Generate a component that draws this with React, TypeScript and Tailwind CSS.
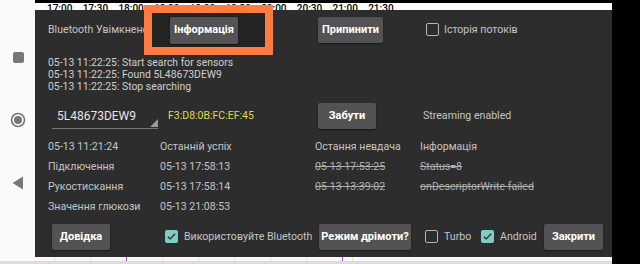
import React from "react";

const times = ["17:00", "17:30", "18:00", "18:30", "19:00", "19:30", "20:00", "20:30", "21:00", "21:30"];

function Box({ checked }: { checked?: boolean }) {
  if (checked) {
    return (
      <span className="w-[13px] h-[13px] rounded-[2px] bg-[#80cbc4] flex items-center justify-center shrink-0">
        <svg width="11" height="11" viewBox="0 0 24 24">
          <path d="M4 12.5l5 5L20 6" fill="none" stroke="#1f2b2a" strokeWidth="2.6" />
        </svg>
      </span>
    );
  }
  return <span className="w-[13px] h-[13px] rounded-[2px] border-[1.5px] border-[#b5b5b5] shrink-0" />;
}

function Btn({ children, className = "" }: { children: React.ReactNode; className?: string }) {
  return (
    <div
      className={`h-[26px] shrink-0 flex items-center justify-center bg-[#535353] rounded-[2px] text-white font-bold text-[11px] shadow-[0_1px_2px_rgba(0,0,0,0.5)] ${className}`}
    >
      {children}
    </div>
  );
}

export default function App() {
  const txt = "text-[#c4c4c4]";
  return (
    <div className="relative w-[640px] h-[264px] bg-black overflow-hidden flex font-['Roboto',sans-serif] text-[10.6px] whitespace-nowrap">
      {/* nav bar */}
      <div className="w-[35px] h-full bg-[#fafafa] flex flex-col items-center pt-[52px] shrink-0">
        <div className="w-[11px] h-[11px] rounded-[2px] bg-[#777] ml-[1px]" />
        <svg className="mt-[49px] ml-[1px]" width="16" height="16" viewBox="0 0 16 16">
          <circle cx="8" cy="8" r="6.5" fill="none" stroke="#777" strokeWidth="1.6" />
          <circle cx="8" cy="8" r="4" fill="#777" />
        </svg>
        <svg className="mt-[48px]" width="12" height="14" viewBox="0 0 12 14">
          <path d="M11 0.5v13L0.5 7z" fill="#777" />
        </svg>
      </div>

      <div className="w-[605px] flex flex-col shrink-0">
        {/* chart header */}
        <div className="h-[10px] pt-[3px] shrink-0">
          <div className="w-[577px] h-[7px] bg-white overflow-hidden flex pl-[12px]">
            {times.map((t) => (
              <span key={t} className="w-[35.7px] shrink-0 text-[10px] leading-[10px] text-black font-medium mt-[1px]">
                {t}
              </span>
            ))}
          </div>
        </div>

        {/* dialog */}
        <div className={`w-[577px] h-[247px] bg-[#2d2d2d] shrink-0 flex flex-col pl-[13px] pt-[7px] ${txt}`}>
          <div className="h-[26px] flex items-center">
            <span className="w-[122px] overflow-hidden">Bluetooth Увімкнено</span>
            <Btn className="w-[68px]">Інформація</Btn>
            <Btn className="w-[65px] ml-[80px]">Припинити</Btn>
            <div className="flex items-center ml-[43px] gap-[5px]">
              <Box />
              <span>Історія потоків</span>
            </div>
          </div>

          <div className="mt-[14px] text-[10.4px] leading-[12px] text-[#cfcfcf]">
            <div>05-13 11:22:25: Start search for sensors</div>
            <div>05-13 11:22:25: Found 5L48673DEW9</div>
            <div>05-13 11:22:25: Stop searching</div>
          </div>

          <div className="mt-[10px] h-[26px] flex items-center">
            <div className="relative w-[106px] h-[26px] ml-[4px] border-b border-[#777] flex items-center pl-[5px] text-[12px] text-[#e6e6e6] shrink-0">
              5L48673DEW9
              <svg className="absolute right-[0px] bottom-[1px]" width="8" height="8" viewBox="0 0 8 8">
                <path d="M8 0v8H0z" fill="#9a9a9a" />
              </svg>
            </div>
            <span className="ml-[10px] text-[10.5px] text-[#dcdc4c] w-[150px] shrink-0">F3:D8:0B:FC:EF:45</span>
            <Btn className="w-[58px]">Забути</Btn>
            <span className="ml-[47px]">Streaming enabled</span>
          </div>

          <div className="mt-[8px] flex flex-col">
            {[
              ["05-13 11:21:24", "Останній успіх", "Остання невдача", "Інформація", false],
              ["Підключення", "05-13 17:58:13", "05-13 17:53:25", "Status=8", true],
              ["Рукостискання", "05-13 17:58:14", "05-13 13:39:02", "onDescriptorWrite failed", true],
              ["Значення глюкози", "05-13 21:08:53", "", "", false],
            ].map(([a, b, c, d, s], i) => (
              <div key={i} className="h-[20px] flex items-center">
                <span className="w-[112px] shrink-0">{a}</span>
                <span className="w-[155px] shrink-0">{b}</span>
                <span className={`w-[105px] shrink-0 ${s ? "line-through text-[#b0b0b0]" : ""}`}>{c}</span>
                <span className={s ? "line-through text-[#b0b0b0]" : ""}>{d}</span>
              </div>
            ))}
          </div>

          <div className="mt-[7px] h-[26px] flex items-center">
            <Btn className="w-[58px] ml-[4px]">Довідка</Btn>
            <div className="flex items-center gap-[6px] ml-[55px] shrink-0">
              <Box checked />
              <span className="w-[126px]">Використовуйте Bluetooth</span>
            </div>
            <Btn className="w-[92px] ml-[9px]">Режим дрімоти?</Btn>
            <div className="flex items-center gap-[6px] ml-[14px] shrink-0">
              <Box />
              <span className="w-[26px]">Turbo</span>
            </div>
            <div className="flex items-center gap-[6px] ml-[11px] shrink-0">
              <Box checked />
              <span className="w-[36px]">Android</span>
            </div>
            <Btn className="w-[59px] ml-[8px]">Закрити</Btn>
          </div>
        </div>

        {/* chart footer */}
        <div className="h-[7px] w-[577px] bg-[#fbf7f7] flex shrink-0">
          <span className="w-[20px] border-r border-[#eadede]" />
          <span className="w-[36px] border-r border-[#eadede]" />
          <span className="w-[36px] border-r border-[#d040d0]" />
          <span className="w-[36px] border-r border-[#eadede]" />
          <span className="w-[36px] border-r border-[#eadede]" />
          <span className="w-[36px] border-r border-[#eadede]" />
          <span className="w-[36px] border-r border-[#eadede]" />
          <span className="w-[36px] border-r border-[#eadede]" />
          <span className="w-[36px] border-r border-[#d040d0]" />
          <span className="w-[10px] border-r border-[#eee2b0]" />
        </div>
      </div>

      {/* bottom grey line */}
      <div className="absolute left-0 bottom-0 w-[612px] h-[3px] bg-[#dcdcdc]" />

      {/* highlight overlay */}
      <div className="absolute left-[144px] top-[5px] w-[129px] h-[50px] border-[8px] border-[#ff7b40] bg-[#242424] flex items-start pl-[18px] pt-[4px]">
        <Btn className="w-[68px] h-[27px]">Інформація</Btn>
      </div>
    </div>
  );
}
